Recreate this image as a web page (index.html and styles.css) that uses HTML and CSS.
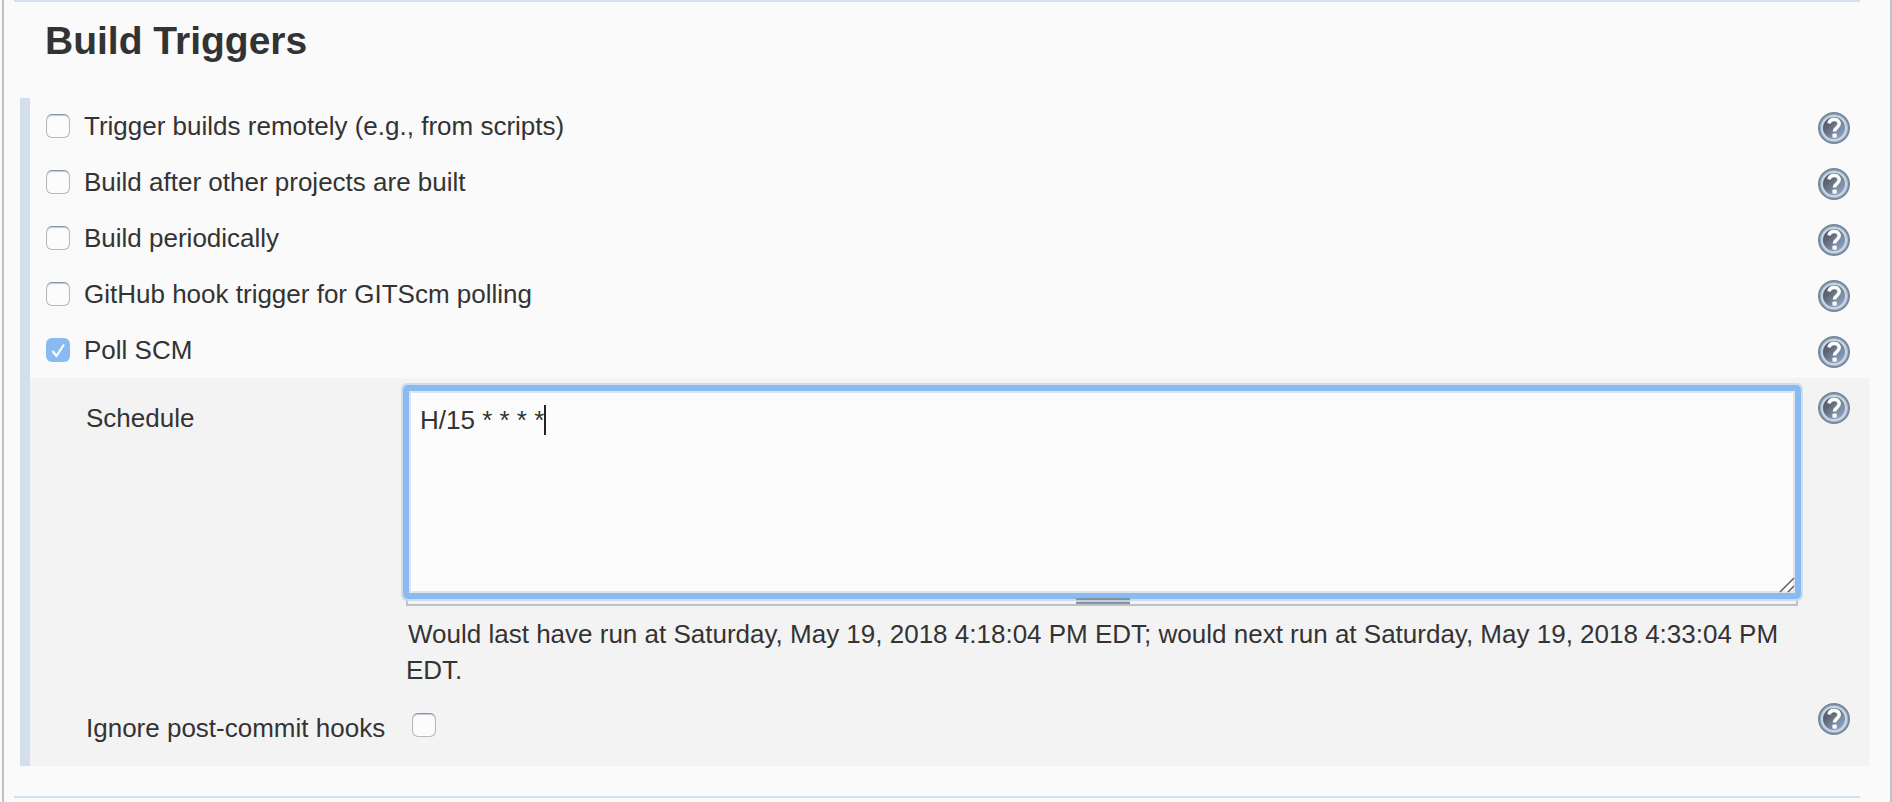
FILE: index.html
```
<!DOCTYPE html>
<html lang="en">
<head>
<meta charset="utf-8">
<title>Build Triggers</title>
<link rel="stylesheet" href="styles.css">
</head>
<body>
<svg class="defs" aria-hidden="true">
  <defs>
    <linearGradient id="ring" x1="0" y1="0" x2="1" y2="1">
      <stop offset="0" stop-color="#8fa9c8"/>
      <stop offset="1" stop-color="#a9c6e8"/>
    </linearGradient>
    <linearGradient id="disc" x1="0" y1="0" x2="1" y2="1">
      <stop offset="0.3" stop-color="#5a616e"/>
      <stop offset="0.65" stop-color="#7d8ea6"/>
      <stop offset="1" stop-color="#8fb3de"/>
    </linearGradient>
    <symbol id="help" viewBox="0 0 32 32">
      <circle cx="16" cy="16" r="15" fill="url(#ring)" stroke="#7b8795" stroke-width="2"/>
      <circle cx="16" cy="16" r="12" fill="url(#disc)" stroke="#c9d6e4" stroke-width="2"/>
      <path d="M11 11.500c.6-2.900 2.500-4.100 5.200-4.100 3 0 5 1.700 5 4.300 0 3.900-4.700 3.900-4.700 7.800" fill="none" stroke="#fbfbfb" stroke-width="3.600"/>
      <rect x="14.400" y="21.500" width="4.400" height="4.200" rx="1" fill="#fbfbfb"/>
    </symbol>
  </defs>
</svg>
<main class="page">
  <section class="section">
    <h1 class="section-title">Build Triggers</h1>
    <div class="group">
      <div class="row">
        <label class="option"><input class="check" type="checkbox">Trigger builds remotely (e.g., from scripts)</label>
        <button class="help" type="button" aria-label="Help"><svg class="help-icon"><use href="#help"/></svg></button>
      </div>
      <div class="row">
        <label class="option"><input class="check" type="checkbox">Build after other projects are built</label>
        <button class="help" type="button" aria-label="Help"><svg class="help-icon"><use href="#help"/></svg></button>
      </div>
      <div class="row">
        <label class="option"><input class="check" type="checkbox">Build periodically</label>
        <button class="help" type="button" aria-label="Help"><svg class="help-icon"><use href="#help"/></svg></button>
      </div>
      <div class="row">
        <label class="option"><input class="check" type="checkbox">GitHub hook trigger for GITScm polling</label>
        <button class="help" type="button" aria-label="Help"><svg class="help-icon"><use href="#help"/></svg></button>
      </div>
      <div class="row">
        <label class="option"><input class="check" type="checkbox" checked>Poll SCM</label>
        <button class="help" type="button" aria-label="Help"><svg class="help-icon"><use href="#help"/></svg></button>
      </div>
      <div class="details">
        <label class="name" for="schedule">Schedule</label>
        <div class="field">
          <div class="editor">
            <textarea class="input" id="schedule" spellcheck="false">H/15 * * * *</textarea>
            <div class="caret-layer" aria-hidden="true"><span class="caret"></span></div>
            <svg class="resizer" viewBox="0 0 16 16" aria-hidden="true"><path d="M1 15 15 1M9 15l6-6" fill="none" stroke="#5a616b" stroke-width="1.500"/></svg>
            <span class="grip"></span>
          </div>
          <p class="message">Would last have run at Saturday, May 19, 2018 4:18:04 PM EDT; would next run at Saturday, May 19, 2018 4:33:04 PM EDT.</p>
        </div>
        <button class="help" type="button" aria-label="Help"><svg class="help-icon"><use href="#help"/></svg></button>
        <label class="name" for="ignore">Ignore post-commit hooks</label>
        <div class="check-field"><input class="check" id="ignore" type="checkbox"></div>
        <button class="help" type="button" aria-label="Help"><svg class="help-icon"><use href="#help"/></svg></button>
      </div>
    </div>
  </section>
</main>
</body>
</html>
```
FILE: styles.css
```
* {
  box-sizing: border-box;
}

body {
  margin: 0;
  background: #fafafa;
  color: #333;
  font: 26px/36px "Liberation Sans", Arial, sans-serif;
}

.defs {
  position: absolute;
  width: 0;
  height: 0;
}

.page {
  min-height: 100vh;
  margin-left: 2px;
  padding: 0 30px 0 10px;
  border: solid #bcc2c6;
  border-width: 0 2px;
}

.section {
  border: solid #d3dfea;
  border-width: 2px 0;
  padding-bottom: 30px;
}

.section-title {
  margin: 0;
  padding: 17px 0 35px 31px;
  font-size: 39px;
  line-height: 44px;
}

.group {
  margin: 0 -10px 0 6px;
  border-left: 10px solid #d3dfea;
}

.row {
  display: flex;
  justify-content: space-between;
  align-items: flex-start;
  height: 56px;
  padding: 0 20px 0 16px;
}

.option {
  display: flex;
  align-items: center;
  gap: 14px;
  padding-top: 10px;
}

.check {
  appearance: none;
  flex: none;
  width: 24px;
  height: 24px;
  margin: 0;
  border: 1px solid #b4babf;
  border-top-color: #8794a5;
  border-radius: 6px;
  background: #fcfcfc;
  box-shadow: inset 0 1px 1px #bcc8d4;
}

.check:checked {
  border: 0;
  background: #89bbf2 url("data:image/svg+xml,%3Csvg xmlns='http://www.w3.org/2000/svg' viewBox='0 0 24 24'%3E%3Cpath d='M6.500 13l4 5L18 6.500' fill='none' stroke='%23fcfcfc' stroke-width='2.200'/%3E%3C/svg%3E");
  box-shadow: none;
}

.help {
  flex: none;
  display: block;
  width: 32px;
  height: 32px;
  margin-top: 14px;
  padding: 0;
  border: 0;
  background: none;
}

.help-icon {
  display: block;
  width: 32px;
  height: 32px;
}

.details {
  display: grid;
  grid-template-columns: 320px 1fr 32px;
  padding: 0 20px 20px 56px;
  background: #f3f3f3;
}

.name {
  padding-top: 22px;
}

.field {
  margin-right: 20px;
  padding-top: 10px;
}

.editor {
  position: relative;
  height: 218px;
  border: 2px solid #bcc2c6;
  border-top: 0;
}

.input {
  display: block;
  width: calc(100% + 4px);
  height: 208px;
  margin: 0 -2px;
  padding: 13px 11px;
  border: 3px solid #89bbf2;
  border-radius: 2px;
  outline: 0;
  box-shadow: 0 0 0 3px #89bbf2, 0 0 0 5px #cfdcea, inset 0 0 0 2px #dfe5eb;
  background: #fcfcfc;
  color: #333;
  font: inherit;
  line-height: 32px;
  resize: none;
}

.caret-layer {
  position: absolute;
  top: 17px;
  left: 136px;
}

.caret {
  display: block;
  width: 2px;
  height: 30px;
  background: #222;
}

.resizer {
  position: absolute;
  right: 1px;
  bottom: 11px;
  width: 16px;
  height: 16px;
}

.grip {
  position: absolute;
  bottom: 0;
  left: calc(50% - 26px);
  width: 54px;
  height: 6px;
  border: solid #8792a0;
  border-width: 2px 0;
  background: #bdd2e9;
}

.message {
  margin: 0;
  padding-top: 10px;
  text-indent: 2px;
}

.check-field {
  display: flex;
  padding: 25px 0 0 6px;
}

.check-field ~ .help {
  margin-top: 15px;
}
```
